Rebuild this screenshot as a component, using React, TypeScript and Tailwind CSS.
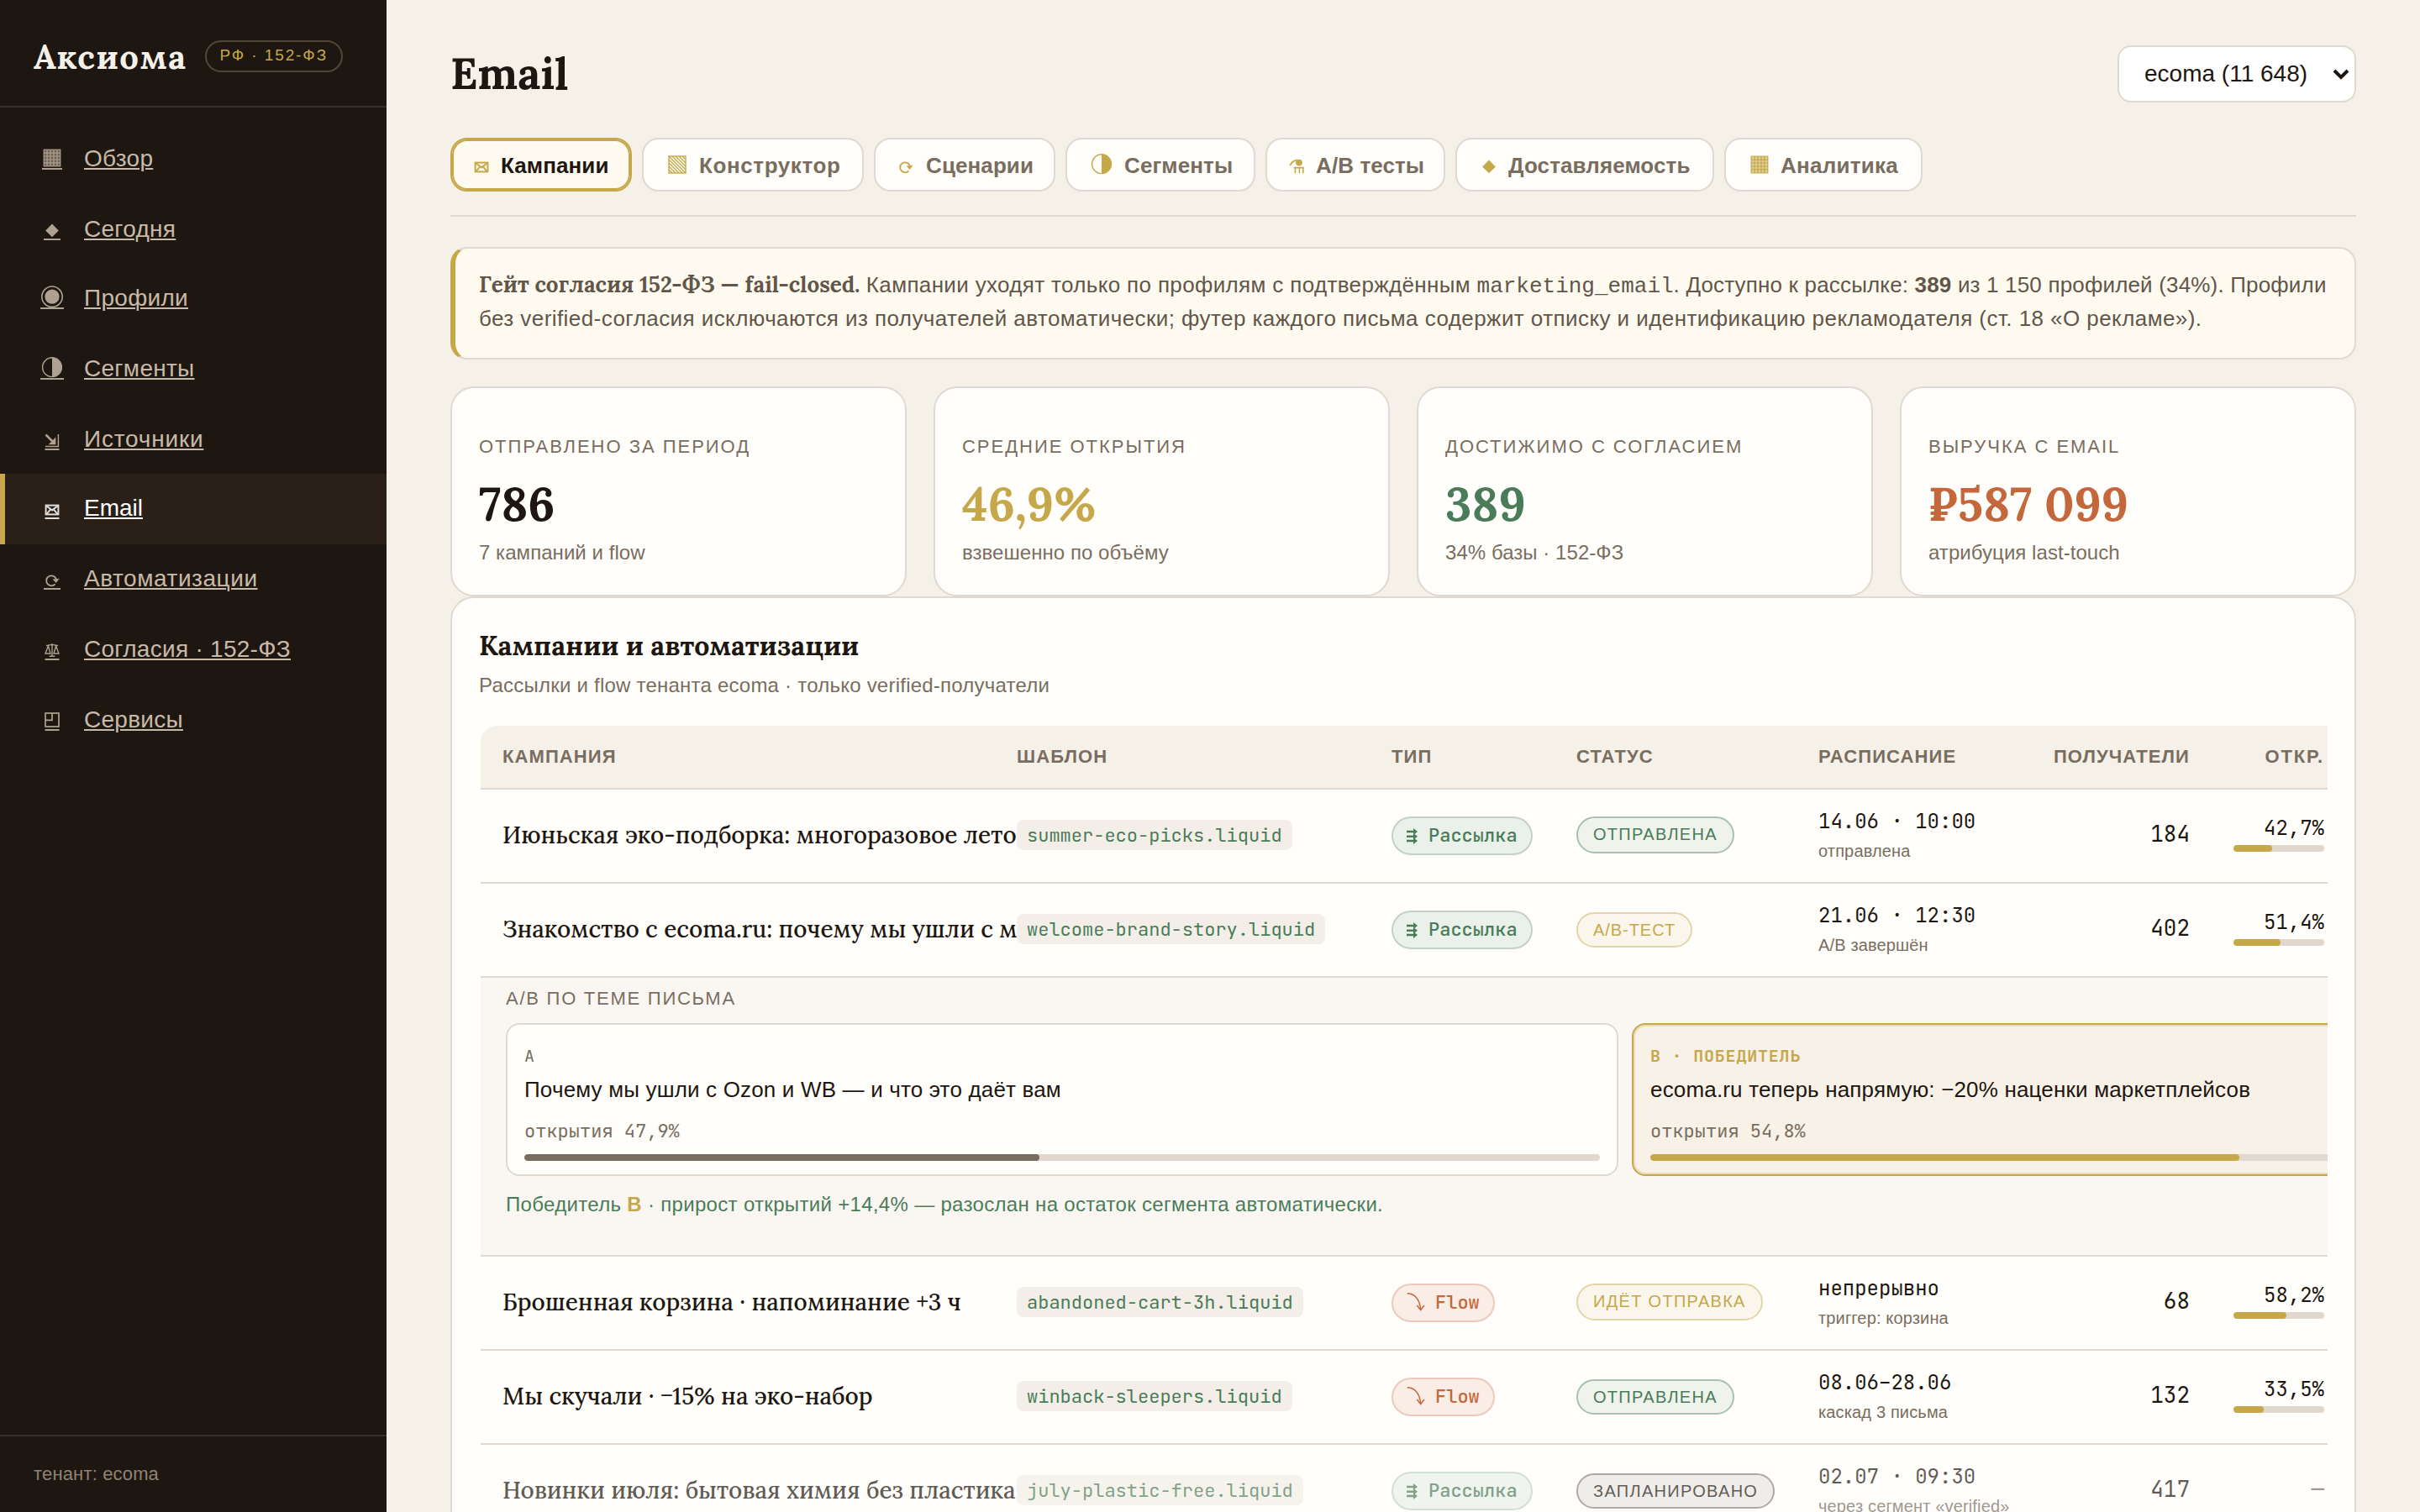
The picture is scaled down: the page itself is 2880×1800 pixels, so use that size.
import type { ReactNode } from 'react';
import clsx from 'clsx';

/** Glyph icons, drawn on a 28px box with the text baseline at y=24 */
const GLYPHS: Record<string, ReactNode> = {
  grid: (
    <g stroke="currentColor" strokeWidth="1.2" fill="none">
      <rect x="4.2" y="4.2" width="19.6" height="19.6" fill="currentColor" fillOpacity="0.55" />
      <path d="M8.1 4v20M12 4v20M16 4v20M19.9 4v20M4 8.1h20M4 12h20M4 16h20M4 19.9h20" />
    </g>
  ),
  hatch: (
    <g stroke="currentColor" strokeWidth="1.4" fill="none">
      <rect x="4" y="4" width="20" height="20" />
      <path d="M4 4l20 20M8 4l16 16M12 4l12 12M16 4l8 8M20 4l4 4M4 8l16 16M4 12l12 12M4 16l8 8M4 20l4 4" />
    </g>
  ),
  diamond: <path d="M14 8.6L21.8 16.4 14 24.2 6.2 16.4z" fill="currentColor" />,
  target: (
    <>
      <circle cx="14" cy="13.2" r="12.2" fill="none" stroke="currentColor" strokeWidth="1.6" />
      <circle cx="14" cy="13.2" r="8.6" fill="currentColor" />
    </>
  ),
  half: (
    <>
      <circle cx="14" cy="13.2" r="11.4" fill="none" stroke="currentColor" strokeWidth="1.4" />
      <path d="M14 1.8a11.4 11.4 0 0 1 0 22.8z" fill="currentColor" />
    </>
  ),
  source: (
    <>
      <path d="M6.5 9.5L17 20" stroke="currentColor" strokeWidth="2.6" />
      <path d="M18.4 12.4v8.8H9.6z" fill="currentColor" />
      <path d="M6 23.4h15.4V9" fill="none" stroke="currentColor" strokeWidth="1.5" />
    </>
  ),
  mail: (
    <g stroke="currentColor" strokeWidth="2" fill="none">
      <rect x="6.6" y="11.6" width="14.8" height="10.8" />
      <path d="M7.2 12.2l6.8 5.2 6.8-5.2M7.2 22.3l4.6-5.4M20.8 22.3l-4.6-5.4" />
    </g>
  ),
  loop: (
    <>
      <path d="M17.6 21.4a6 6 0 1 1 1-6.6v2.4" fill="none" stroke="currentColor" strokeWidth="1.9" />
      <path d="M14.6 15.4l8-.6-3.8 5.2z" fill="currentColor" />
    </>
  ),
  scales: (
    <g stroke="currentColor" strokeWidth="1.4" fill="none">
      <path d="M14 8v15M7 10.4c3 .4 4.6-1 7-1s4 1.4 7 1M10.6 23.2h6.8" />
      <path d="M9.4 11l-3.4 9h6zM18.6 11L16 20h6z" />
    </g>
  ),
  corner: (
    <g stroke="currentColor" strokeWidth="1.7" fill="none">
      <rect x="6" y="7" width="16" height="16" />
      <path d="M14 7v8.4H6" />
    </g>
  ),
  flask: (
    <>
      <path d="M6.4 15c1-3.6 4.6-5.6 8.2-6.6" fill="none" stroke="currentColor" strokeWidth="2" />
      <circle cx="17" cy="11.6" r="3.9" fill="currentColor" />
      <path d="M10.8 17.6h12M12.4 17.6v6.6M17.4 17.6v6.6M21.8 17.6v6.6" fill="none" stroke="currentColor" strokeWidth="1.6" />
    </>
  ),
};

function Glyph({ name, underline = 0 }: { name: string; underline?: number }) {
  return (
    <svg width="28" height="28" viewBox="0 0 28 28" className="shrink-0 overflow-visible">
      {GLYPHS[name]}
      {underline > 0 && <rect x={14 - underline / 2} y="26" width={underline} height="2" fill="currentColor" />}
    </svg>
  );
}

const NAV = [
  { icon: 'grid', line: 24, label: 'Обзор' },
  { icon: 'diamond', line: 20, label: 'Сегодня', tight: true },
  { icon: 'target', line: 28, label: 'Профили', track: 'tracking-[0.3px]' },
  { icon: 'half', line: 28, label: 'Сегменты' },
  { icon: 'source', line: 17, label: 'Источники', tight: true, track: 'tracking-[0.8px]' },
  { icon: 'mail', line: 17, label: 'Email', active: true, track: 'tracking-normal' },
  { icon: 'loop', line: 20, label: 'Автоматизации', track: 'tracking-[0.55px]' },
  { icon: 'scales', line: 17, label: 'Согласия · 152-ФЗ' },
  { icon: 'corner', line: 17, label: 'Сервисы' },
];

const TABS = [
  { icon: 'mail', label: 'Кампании', width: 'w-[216px]', box: 'w-[18px] mr-[2px]', active: true },
  { icon: 'hatch', label: 'Конструктор', width: 'w-[264px]', box: 'w-[28px]', track: 'tracking-[0.6px]' },
  { icon: 'loop', label: 'Сценарии', width: 'w-[216px]', box: 'w-[19px] mr-[3px]' },
  { icon: 'half', label: 'Сегменты', width: 'w-[226px]', box: 'w-[30px]' },
  { icon: 'flask', label: 'A/B тесты', width: 'w-[214px]', box: 'w-[17px] mr-[3px]' },
  { icon: 'diamond', label: 'Доставляемость', width: 'w-[308px]', box: 'w-[23px]' },
  { icon: 'grid', label: 'Аналитика', width: 'w-[236px]', box: 'w-[27px]', track: 'tracking-[0.26px]' },
];

const STATS = [
  { label: 'Отправлено за период', value: '786', note: '7 кампаний и flow', color: 'text-[#1e1610]' },
  { label: 'Средние открытия', value: '46,9%', note: 'взвешенно по объёму', color: 'text-[#c6a84a]' },
  { label: 'Достижимо с согласием', value: '389', note: '34% базы · 152-ФЗ', color: 'text-[#4a7c5a]' },
  { label: 'Выручка с email', value: '₽587 099', note: 'атрибуция last-touch', color: 'text-[#c4673a]' },
];

const STATUS_STYLES = {
  sent: 'tracking-[1.3px] text-[#4a7c5a] bg-[#eff3ec] border-[#a8bfb1]',
  test: 'tracking-[0.95px] text-[#c6a84a] bg-[#faf6ec] border-[#e2d6a8]',
  live: 'tracking-[1.3px] text-[#c6a84a] bg-[#faf6ec] border-[#e2d6a8]',
  planned: 'tracking-[1.3px] text-[#1e1610] bg-[#e9e7e3] border-[#8b8681]',
};

interface Campaign {
  name: string;
  template: string;
  type: 'mail' | 'flow';
  status: keyof typeof STATUS_STYLES;
  statusLabel: string;
  tall?: boolean;
  when: string;
  whenNote: string;
  recipients: string;
  open?: number;
  muted?: boolean;
}

const CAMPAIGNS: Campaign[] = [
  { name: 'Июньская эко-подборка: многоразовое лето', template: 'summer-eco-picks.liquid', type: 'mail', status: 'sent', statusLabel: 'Отправлена', tall: true, when: '14.06 · 10:00', whenNote: 'отправлена', recipients: '184', open: 42.7 },
  { name: 'Знакомство с ecoma.ru: почему мы ушли с маркетплейсов', template: 'welcome-brand-story.liquid', type: 'mail', status: 'test', statusLabel: 'A/B-тест', when: '21.06 · 12:30', whenNote: 'A/B завершён', recipients: '402', open: 51.4 },
  { name: 'Брошенная корзина · напоминание +3 ч', template: 'abandoned-cart-3h.liquid', type: 'flow', status: 'live', statusLabel: 'Идёт отправка', tall: true, when: 'непрерывно', whenNote: 'триггер: корзина', recipients: '68', open: 58.2 },
  { name: 'Мы скучали · −15% на эко-набор', template: 'winback-sleepers.liquid', type: 'flow', status: 'sent', statusLabel: 'Отправлена', when: '08.06–28.06', whenNote: 'каскад 3 письма', recipients: '132', open: 33.5 },
  { name: 'Новинки июля: бытовая химия без пластика', template: 'july-plastic-free.liquid', type: 'mail', status: 'planned', statusLabel: 'Запланировано', when: '02.07 · 09:30', whenNote: 'через сегмент «verified»', recipients: '417', muted: true },
];

const COLS = 'grid grid-cols-[638px_446px_220px_288px_240px_202px_160px] items-start';
const MONO = "font-['JetBrains_Mono','DejaVu_Sans_Mono',monospace]";
const SERIF = "font-['Lora','Liberation_Serif',serif]";

const percent = (n: number) => `${n.toFixed(1).replace('.', ',')}%`;

function Sidebar() {
  return (
    <aside className="w-[460px] shrink-0 h-full flex flex-col bg-[#1e1610]">
      <div className="h-[128px] pt-[8px] pl-[40px] flex items-center gap-[22px] border-b-2 border-[#38302b]">
        <span className={clsx(SERIF, 'mt-[2px] text-[40px] leading-[48px] font-bold tracking-[1.5px] text-[#f5f0e8]')}>Аксиома</span>
        <span className="h-[38px] w-[164px] pl-[15px] border-2 border-[#50463a] rounded-full text-[19px] leading-[32px] tracking-[1.9px] whitespace-nowrap text-[#c6a84a]">
          РФ · 152-ФЗ
        </span>
      </div>
      <nav className="mt-[20px] flex-1">
        {NAV.map((item) => (
          <a
            key={item.label}
            className={clsx(
              'flex items-start gap-[24px] pt-[25px] border-l-[6px] pl-[42px]',
              item.tight ? 'h-[82px]' : 'h-[84px]',
              item.active ? 'bg-[#2b2018] border-[#c6a84a] text-white' : 'border-transparent text-[#c8baa8]'
            )}
          >
            <span className="mt-px opacity-85"><Glyph name={item.icon} underline={item.line} /></span>
            <span className={clsx('text-[28px] leading-[32px] underline decoration-2 underline-offset-[2px]', item.track ?? 'tracking-[0.28px]')}>
              {item.label}
            </span>
          </a>
        ))}
      </nav>
      <div className="h-[92px] border-t-2 border-[#38302b] pl-[40px] pt-[30px] text-[22px] leading-[30px] tracking-[0.16px] text-[#8f8376]">
        тенант: ecoma
      </div>
    </aside>
  );
}

function Tabs() {
  return (
    <div className="mt-[42px] pb-[28px] flex gap-[12px] border-b-2 border-[#dfd9d1]">
      {TABS.map((tab) => (
        <button
          key={tab.label}
          className={clsx(
            'h-[64px] pl-[26px] flex items-center gap-[12px] border-2 rounded-[20px] text-[26px] leading-[32px] font-bold whitespace-nowrap',
            tab.width,
            tab.track ?? 'tracking-[0.1px]',
            tab.active
              ? 'bg-[#fefaf0] border-[#c6a84a] shadow-[inset_0_0_0_2px_#c6a84a] text-[#1e1610]'
              : 'bg-[#fffefb] border-[#dfd9d1] text-[#796d60]'
          )}
        >
          <span className={clsx('flex justify-center text-[#c6a84a]', tab.box)}><Glyph name={tab.icon} /></span>
          <span className="mt-[2px]">{tab.label}</span>
        </button>
      ))}
    </div>
  );
}

function ConsentBanner() {
  return (
    <div className="mt-[36px] h-[134px] shrink-0 pt-[23px] pl-[28px] border-2 border-l-[6px] border-[#dfd9d1] border-l-[#c6a84a] rounded-[20px] bg-[#fefaf0] text-[26px] leading-[40px] text-[#62564a] whitespace-nowrap">
      <p className="h-[40px] tracking-[0.17px]">
        <strong className={clsx(SERIF, 'font-bold tracking-normal')}>Гейт согласия 152-ФЗ — fail-closed.</strong>
        <span className="tracking-[0.35px]"> Кампании уходят только по профилям с подтверждённым </span>
        <code className="font-['Liberation_Mono',monospace] tracking-normal">marketing_email</code>. Доступно к рассылке:{' '}
        <b>389</b> из 1 150 профилей (34%). Профили
      </p>
      <p className="h-[40px] tracking-[0.43px]">
        без verified-согласия исключаются из получателей автоматически; футер каждого письма содержит отписку и
        идентификацию рекламодателя (ст. 18 «О рекламе»).
      </p>
    </div>
  );
}

function StatCard({ label, value, note, color }: (typeof STATS)[number]) {
  return (
    <div className="h-[250px] pt-[55px] px-[32px] border-2 border-[#dfd9d1] rounded-[28px] bg-[#fffefb]">
      <p className="text-[22px] leading-[30px] tracking-[1.98px] uppercase text-[#796d60]">{label}</p>
      <p className={clsx(SERIF, 'mt-[21px] text-[56px] leading-[64px] font-bold', color)}>{value}</p>
      <p className="mt-[11px] text-[24px] leading-[30px] tracking-[0.05px] text-[#796d60]">{note}</p>
    </div>
  );
}

function TypeChip({ type }: { type: Campaign['type'] }) {
  const isFlow = type === 'flow';
  return (
    <span
      className={clsx(
        MONO,
        'mt-[32px] h-[46px] w-fit pl-[16px] pr-[16px] flex border-2 rounded-full text-[22px] leading-[41px] font-medium',
        isFlow ? 'bg-[#f9ede6] border-[#ebc9bf] text-[#c4673a]' : 'bg-[#eaf0ea] border-[#c2d2c7] text-[#4a7c5a]'
      )}
    >
      {isFlow ? (
        <svg width="34" height="24" viewBox="0 0 34 24" className="mt-[8px]" fill="none" stroke="currentColor" strokeWidth="1.5">
          <path d="M.7 1.7C9 1.7 15.5 8 16.7 21M12.3 16l4.4 5.6L21 16" />
        </svg>
      ) : (
        <svg width="26" height="20" viewBox="0 0 26 20" className="mt-[12px]" stroke="currentColor" strokeWidth="2.4">
          <path d="M0 4h9M0 9.7h9M0 15h9" />
          <path d="M8 0v8L13 4zM8 5.7v8l5-4zM8 11v8l5-4z" fill="currentColor" stroke="none" />
        </svg>
      )}
      {isFlow ? 'Flow' : 'Рассылка'}
    </span>
  );
}

function CampaignRow({ row }: { row: Campaign }) {
  const dim = row.muted && 'opacity-70';
  return (
    <div className={clsx(COLS, 'h-[112px] border-b-2 border-[#dfd9d1]')}>
      <div className={clsx(SERIF, 'mt-[34px] pl-[26px] overflow-hidden whitespace-nowrap text-[28px] leading-[40px] font-medium text-[#1e1610]', dim)}>
        {row.name}
      </div>
      <div className={clsx(MONO, 'mt-[36px] h-[36px] w-fit px-[12px] rounded-[8px] bg-[#f3efe8] text-[22px] leading-[37px] text-[#4a7c5a]', dim)}>
        {row.template}
      </div>
      <div className={clsx(dim)}><TypeChip type={row.type} /></div>
      <div className={clsx(dim)}>
        <span
          className={clsx(
            'block w-fit px-[18px] border-2 rounded-full text-[20px] leading-[38px] uppercase whitespace-nowrap',
            row.tall ? 'mt-[32px] h-[44px]' : 'mt-[34px] h-[42px]',
            STATUS_STYLES[row.status]
          )}
        >
          {row.statusLabel}
        </span>
      </div>
      <div className={clsx('pt-[23px] whitespace-nowrap', dim)}>
        <p className={clsx(MONO, 'text-[24px] leading-[30px] text-[#1e1610]')}>{row.when}</p>
        <p className="mt-[7px] text-[20px] leading-[26px] tracking-[0.15px] text-[#796d60]">{row.whenNote}</p>
      </div>
      <div className={clsx(MONO, 'mt-[33px] text-right text-[26px] leading-[40px] text-[#1e1610]', dim)}>{row.recipients}</div>
      {row.open ? (
        <div className="pt-[31px] flex flex-col items-end">
          <span className={clsx(MONO, 'text-[24px] leading-[30px] text-[#1e1610]')}>{percent(row.open)}</span>
          <span className="mt-[5px] w-[108px] h-[8px] rounded-[4px] overflow-hidden bg-[#e0d8ce]">
            <span className="block h-full rounded-[4px] bg-[#c6a84a]" style={{ width: `${row.open}%` }} />
          </span>
        </div>
      ) : (
        <div className={clsx(MONO, 'mt-[33px] text-right text-[26px] leading-[40px] text-[#796d60]', dim)}>—</div>
      )}
    </div>
  );
}

function Variant({ tag, subject, open, winner }: { tag: string; subject: string; open: number; winner?: boolean }) {
  return (
    <div
      className={clsx(
        'h-[182px] pt-[24px] px-[20px] border-2 rounded-[16px]',
        winner ? 'bg-[#f7f1e7] border-[#c6a84a] shadow-[inset_0_0_0_2px_#e8dcb8]' : 'bg-[#fffefb] border-[#dfd9d1]'
      )}
    >
      <p className={clsx(MONO, 'text-[20px] leading-[27px] tracking-[0.8px] uppercase', winner ? 'text-[#c6a84a] font-semibold' : 'text-[#796d60]')}>{tag}</p>
      <p className="mt-[8px] text-[26px] leading-[36px] tracking-[0.17px] text-[#1e1610]">{subject}</p>
      <p className={clsx(MONO, 'mt-[17px] text-[22px] leading-[30px] text-[#796d60]')}>открытия {percent(open)}</p>
      <div className="mt-[12px] h-[8px] rounded-[4px] overflow-hidden bg-[#e0d8ce]">
        <div className={clsx('h-full rounded-[4px]', winner ? 'bg-[#c6a84a]' : 'bg-[#796d60]')} style={{ width: `${open}%` }} />
      </div>
    </div>
  );
}

function AbTestBlock() {
  return (
    <div className="h-[332px] pt-[10px] px-[30px] bg-[#faf7f2] border-b-2 border-[#dfd9d1]">
      <p className="text-[22px] leading-[30px] tracking-[1.75px] uppercase text-[#796d60]">A/B по теме письма</p>
      <div className="mt-[14px] grid grid-cols-2 gap-[16px]">
        <Variant tag="A" subject="Почему мы ушли с Ozon и WB — и что это даёт вам" open={47.9} />
        <Variant tag="B · победитель" subject="ecoma.ru теперь напрямую: −20% наценки маркетплейсов" open={54.8} winner />
      </div>
      <p className="mt-[17px] text-[24px] leading-[34px] tracking-[0.32px] text-[#4a7c5a]">
        Победитель <b className="text-[#c6a84a]">B</b> · прирост открытий +14,4% — разослан на остаток сегмента автоматически.
      </p>
    </div>
  );
}

function CampaignsPanel() {
  return (
    <section className="h-[1200px] shrink-0 pt-[37px] px-[32px] border-2 border-[#dfd9d1] rounded-[28px] bg-[#fffefb]">
      <h2 className={clsx(SERIF, 'text-[32px] leading-[40px] font-bold text-[#1e1610]')}>Кампании и автоматизации</h2>
      <p className="mt-[12px] text-[24px] leading-[30px] tracking-[0.23px] text-[#796d60]">
        Рассылки и flow тенанта ecoma · только verified-получатели
      </p>
      <div className="mt-[33px] ml-[2px] overflow-hidden rounded-tl-[20px]">
        <div className="w-[2724px]">
          <div className={clsx(COLS, 'h-[76px] bg-[#f5f0e8] border-b-2 border-[#dfd9d1] text-[22px] leading-[74px] font-bold tracking-[1.1px] uppercase text-[#796d60]')}>
            <span className="pl-[26px]">Кампания</span>
            <span>Шаблон</span>
            <span>Тип</span>
            <span>Статус</span>
            <span>Расписание</span>
            <span className="text-right">Получатели</span>
            <span className="text-right tracking-[1.8px]">Откр.</span>
          </div>
          {CAMPAIGNS.map((row) => (
            <div key={row.template}>
              <CampaignRow row={row} />
              {row.status === 'test' && <AbTestBlock />}
            </div>
          ))}
        </div>
      </div>
    </section>
  );
}

export default function App() {
  return (
    <div className="w-[2880px] h-[1800px] overflow-hidden flex bg-[#f5f0e8] font-['Liberation_Sans',Arial,sans-serif]">
      <Sidebar />
      <main className="flex-1 min-w-0 pt-[54px] px-[76px] flex flex-col">
        <header className="h-[68px] shrink-0 flex items-center justify-between">
          <h1 className={clsx(SERIF, '-mt-[2px] text-[52px] leading-[64px] font-bold text-[#1e1610]')}>Email</h1>
          <div className="h-[68px] w-[284px] pl-[30px] pr-[6px] flex items-center justify-between border-2 border-[#dfd9d1] rounded-[16px] bg-white text-[28px] text-[#1e1610] whitespace-nowrap">
            ecoma (11 648)
            <svg width="20" height="14" viewBox="0 0 20 14" fill="none" stroke="currentColor" strokeWidth="4">
              <path d="M2 3l8 8 8-8" />
            </svg>
          </div>
        </header>
        <Tabs />
        <ConsentBanner />
        <div className="mt-[32px] shrink-0 grid grid-cols-4 gap-[32px]">
          {STATS.map((stat) => (
            <StatCard key={stat.label} {...stat} />
          ))}
        </div>
        <CampaignsPanel />
      </main>
    </div>
  );
}
